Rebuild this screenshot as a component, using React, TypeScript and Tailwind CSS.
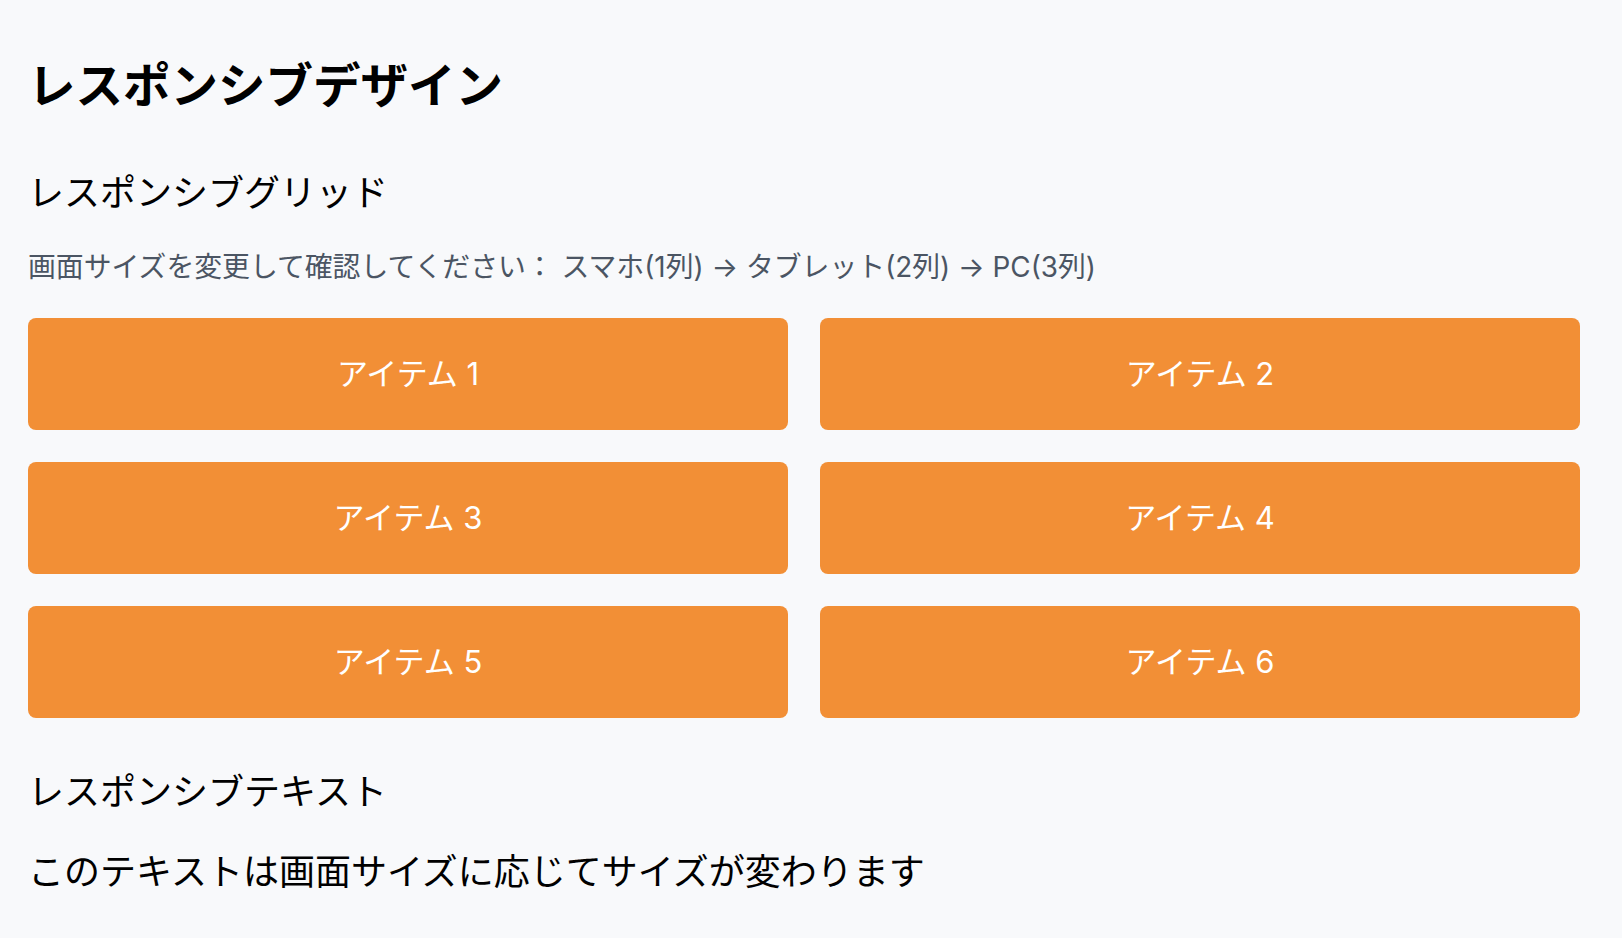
const items = [1, 2, 3, 4, 5, 6]

export default function App() {
  return (
    <div
      className="min-h-screen bg-[#f8f9fb] pl-7 pr-[42px] pt-7 text-black"
      style={{ fontFamily: 'Inter, "Noto Sans CJK JP", sans-serif' }}
    >
      <h1 className="mt-[34px] text-[47.5px] font-bold leading-none">レスポンシブデザイン</h1>

      <h2 className="mt-[65px] text-[36px] leading-none">レスポンシブグリッド</h2>
      <p className="mt-[43px] text-[27.85px] leading-none text-[#4b5563]">
        画面サイズを変更して確認してください： スマホ(1列) → タブレット(2列) → PC(3列)
      </p>

      <div className="mt-[37px] grid grid-cols-2 gap-8">
        {items.map((n) => (
          <div
            key={n}
            className="flex h-[112px] items-center justify-center rounded-lg bg-[#f28f36] text-[31px] text-white"
          >
            アイテム {n}
          </div>
        ))}
      </div>

      <h2 className="mt-[56px] text-[36px] leading-none">レスポンシブテキスト</h2>
      <p className="mt-[44px] text-[36px] leading-none">このテキストは画面サイズに応じてサイズが変わります</p>
    </div>
  )
}
